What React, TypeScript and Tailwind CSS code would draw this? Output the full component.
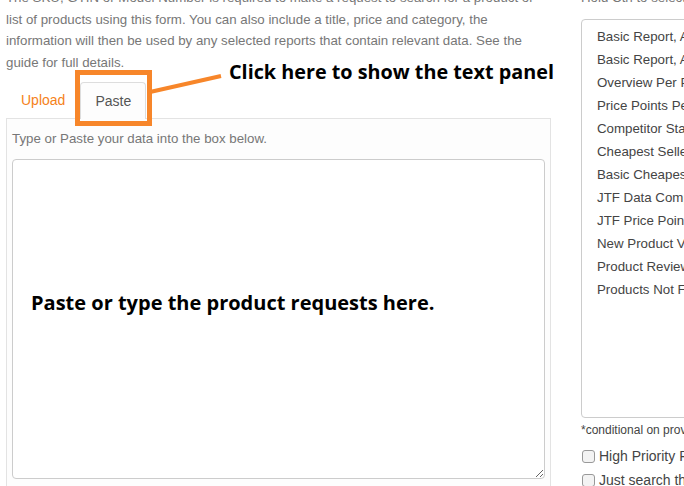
import React from "react";

const items = [
  "Basic Report, All Sellers",
  "Basic Report, Amazon Only",
  "Overview Per Product",
  "Price Points Per Seller",
  "Competitor Stats",
  "Cheapest Seller Report",
  "Basic Cheapest Seller",
  "JTF Data Comparison",
  "JTF Price Points",
  "New Product Visibility",
  "Product Reviews",
  "Products Not Found",
];

export default function App() {
  return (
    <div className="relative w-[684px] h-[486px] overflow-hidden bg-white" style={{ fontFamily: '"Liberation Sans", Arial, sans-serif' }}>
      <div className="flex mt-[-13px]">
        {/* Left column */}
        <div className="w-[551px] pl-[6px] shrink-0">
          <p className="text-[13.3px] leading-[21.5px] text-[#777] pr-[4px]">
            The SKU, GTIN or Model Number is required to make a request to search for a product or list of products using this form. You can also include a title, price and category, the information will then be used by any selected reports that contain relevant data. See the guide for full details.
          </p>
          <div className="flex mt-[9px] text-[14px]">
            <div className="h-[36px] px-[14px] flex items-center text-[#f58220] border border-transparent">Upload</div>
            <div className="h-[37px] px-[14px] flex items-center text-[#555] border border-[#ddd] border-b-0 rounded-t-[4px] bg-[#fdfdfd] relative z-10">Paste</div>
          </div>
          <div className="border border-[#e3e3e3] bg-[#fdfdfd] px-[5px] pt-[12px] h-[400px] -mt-px">
            <div className="text-[13.3px] leading-[15px] text-[#777]">Type or Paste your data into the box below.</div>
            <textarea
              className="mt-[13px] block w-full h-[320px] border border-[#ccc] rounded-[4px] bg-white"
              defaultValue=""
            />
          </div>
        </div>
        {/* Right column */}
        <div className="ml-[30px] w-[200px] shrink-0">
          <div className="text-[13.3px] leading-[21.5px] text-[#777] whitespace-nowrap">Hold Ctrl to select multiple reports</div>
          <div className="mt-[10.5px] h-[399px] border border-[#ccc] rounded-[4px] bg-white pt-[5px] pl-[15px] overflow-hidden">
            {items.map((t) => (
              <div key={t} className="text-[13.3px] leading-[23px] text-[#444] whitespace-nowrap">{t}</div>
            ))}
          </div>
          <div className="mt-[4px] text-[12px] leading-[17px] text-[#444] whitespace-nowrap">*conditional on providing a price</div>
          <div className="mt-[7px] flex items-center h-[20px]">
            <span className="w-[13px] h-[13px] ml-px border border-[#999] rounded-[3px] bg-[#f3f3f3] shrink-0" />
            <span className="ml-[4px] text-[14px] text-[#444] whitespace-nowrap">High Priority Request</span>
          </div>
          <div className="mt-[4px] flex items-center h-[20px]">
            <span className="w-[13px] h-[13px] ml-px border border-[#999] rounded-[3px] bg-[#f3f3f3] shrink-0" />
            <span className="ml-[4px] text-[14px] text-[#444] whitespace-nowrap">Just search the first result</span>
          </div>
        </div>
      </div>

      {/* Annotations */}
      <div className="absolute left-[75px] top-[70px] w-[77px] h-[56px] border-[5px] border-[#f7862a] z-20" />
      <svg className="absolute left-0 top-0 z-20" width="684" height="486">
        <line x1="150" y1="92" x2="221" y2="76" stroke="#f7862a" strokeWidth="4" />
      </svg>
      <div className="absolute left-[229px] top-[57px] text-[19.8px] font-bold text-black whitespace-nowrap z-20" style={{ fontFamily: '"Open Sans", sans-serif' }}>
        Click here to show the text panel
      </div>
      <div className="absolute left-[31px] top-[288px] text-[20px] font-bold text-black whitespace-nowrap z-20" style={{ fontFamily: '"Open Sans", sans-serif' }}>
        Paste or type the product requests here.
      </div>
    </div>
  );
}
